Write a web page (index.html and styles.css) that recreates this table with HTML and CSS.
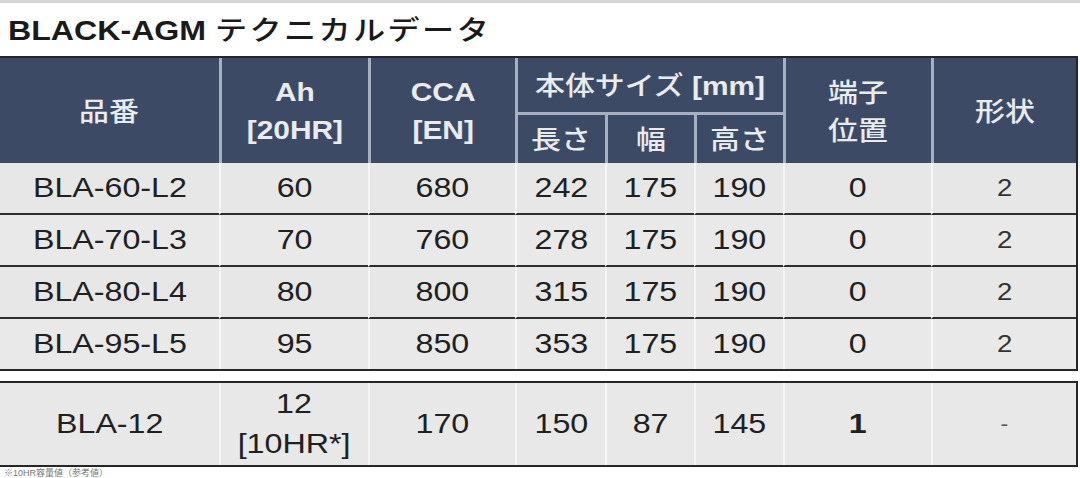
FILE: index.html
```html
<!DOCTYPE html>
<html lang="ja">
<head>
<meta charset="utf-8">
<title>BLACK-AGM テクニカルデータ</title>
<link rel="stylesheet" href="styles.css">
</head>
<body>
<div class="page">
  <div class="topbar"></div>
  <h1 class="title"><span class="title-in"><span class="lat">BLACK-AGM</span> <span class="jp">テクニカルデータ</span></span></h1>

  <table class="spec main">
    <colgroup>
      <col class="c1"><col class="c2"><col class="c3"><col class="c4"><col class="c5"><col class="c6"><col class="c7"><col class="c8">
    </colgroup>
    <thead>
      <tr class="h1">
        <th rowspan="2" class="first"><span class="t cj">品番</span></th>
        <th rowspan="2"><span class="t">Ah<br>[20HR]</span></th>
        <th rowspan="2"><span class="t">CCA<br>[EN]</span></th>
        <th colspan="3" class="group"><span class="t"><span class="cj">本体サイズ</span> [mm]</span></th>
        <th rowspan="2"><span class="t cj">端子<br>位置</span></th>
        <th rowspan="2"><span class="t cj">形状</span></th>
      </tr>
      <tr class="h2">
        <th class="sub first-sub"><span class="t cj">長さ</span></th>
        <th class="sub"><span class="t cj">幅</span></th>
        <th class="sub"><span class="t cj">高さ</span></th>
      </tr>
    </thead>
    <tbody>
      <tr>
        <td class="first"><span class="t">BLA-60-L2</span></td><td><span class="t">60</span></td><td><span class="t">680</span></td><td><span class="t">242</span></td><td><span class="t">175</span></td><td><span class="t">190</span></td><td><span class="t">0</span></td><td class="shape"><span class="t">2</span></td>
      </tr>
      <tr>
        <td class="first"><span class="t">BLA-70-L3</span></td><td><span class="t">70</span></td><td><span class="t">760</span></td><td><span class="t">278</span></td><td><span class="t">175</span></td><td><span class="t">190</span></td><td><span class="t">0</span></td><td class="shape"><span class="t">2</span></td>
      </tr>
      <tr>
        <td class="first"><span class="t">BLA-80-L4</span></td><td><span class="t">80</span></td><td><span class="t">800</span></td><td><span class="t">315</span></td><td><span class="t">175</span></td><td><span class="t">190</span></td><td><span class="t">0</span></td><td class="shape"><span class="t">2</span></td>
      </tr>
      <tr class="last">
        <td class="first"><span class="t">BLA-95-L5</span></td><td><span class="t">95</span></td><td><span class="t">850</span></td><td><span class="t">353</span></td><td><span class="t">175</span></td><td><span class="t">190</span></td><td><span class="t">0</span></td><td class="shape"><span class="t">2</span></td>
      </tr>
    </tbody>
  </table>

  <table class="spec extra">
    <colgroup>
      <col class="c1"><col class="c2"><col class="c3"><col class="c4"><col class="c5"><col class="c6"><col class="c7"><col class="c8">
    </colgroup>
    <tbody>
      <tr class="last tall">
        <td class="first"><span class="t">BLA-12</span></td><td><span class="t">12<br>[10HR*]</span></td><td><span class="t">170</span></td><td><span class="t">150</span></td><td><span class="t">87</span></td><td><span class="t">145</span></td><td class="bold"><span class="t">1</span></td><td class="dash"><span class="t">-</span></td>
      </tr>
    </tbody>
  </table>

  <p class="note">※10HR容量値（参考値）</p>
</div>
</body>
</html>
```

FILE: styles.css
```css
html, body {
  margin: 0;
  padding: 0;
  background: #ffffff;
}

body {
  width: 1080px;
  height: 478px;
  overflow: hidden;
  font-family: "Liberation Sans", "Noto Sans CJK JP", sans-serif;
  color: #1f1f1f;
}

.page {
  width: 1080px;
}

.topbar {
  height: 3px;
  background: #d6d6d6;
}

.title {
  margin: 0;
  height: 53px;
  padding-left: 8px;
  display: flex;
  align-items: center;
  font-size: 27px;
  font-weight: 700;
  color: #1a1a1a;
  white-space: nowrap;
}

.title-in {
  display: inline-block;
  transform: scaleX(1.19);
  transform-origin: left center;
  position: relative;
  top: -1px;
}

.title .jp {
  font-family: "Noto Sans CJK JP", sans-serif;
  font-weight: 500;
  letter-spacing: 2px;
}

/* tables */
.spec {
  border-collapse: separate;
  border-spacing: 0;
  table-layout: fixed;
  width: 1078px;
  border-top: 2px solid #262626;
  border-right: 2px solid #262626;
  border-bottom: 2px solid #262626;
  border-left: 0;
}

.c1 { width: 219px; }
.c2 { width: 149px; }
.c3 { width: 147px; }
.c4 { width: 90px; }
.c5 { width: 89px; }
.c6 { width: 89px; }
.c7 { width: 148px; }
.c8 { width: 145px; }

.t {
  display: inline-block;
  transform: scaleX(1.15);
}

/* header */
.spec th {
  background: #3c4a66;
  color: #e9ebef;
  font-size: 26px;
  font-weight: 700;
  line-height: 38px;
  padding: 0;
  text-align: center;
  vertical-align: middle;
  border-left: 3px solid #a7b0bf;
}

.spec th .cj {
  font-family: "Noto Sans CJK JP", sans-serif;
  font-weight: 500;
}

.spec th.first {
  border-left: 0;
}

.h1 th.group {
  height: 54px;
  border-bottom: 3px solid #a7b0bf;
}

.h2 th {
  height: 48px;
}

.h2 th.first-sub {
  border-left: 3px solid #a7b0bf;
}

/* body rows */
.spec td {
  background: #e7e7e7;
  font-size: 28px;
  line-height: 40px;
  height: 50px;
  padding: 0;
  text-align: center;
  vertical-align: middle;
  color: #202020;
  border-left: 2px solid #f6f6f6;
  border-bottom: 2px solid #2e2e2e;
}

.spec td.first {
  border-left: 0;
}

.spec tbody tr:nth-child(even) td {
  background: #e9e9e9;
}

.spec tr.last td {
  border-bottom: 0;
}

.spec td.shape {
  font-size: 24px;
  color: #333333;
}

.extra {
  margin-top: 10px;
}

.extra tr.tall td {
  height: 82px;
  background: #e8e8e8;
}

.extra td.bold {
  font-weight: 700;
}

.extra td.dash {
  font-size: 20px;
  color: #555555;
}

.note {
  margin: 1px 0 0 4px;
  font-size: 9px;
  line-height: 10px;
  color: #777777;
}
```
